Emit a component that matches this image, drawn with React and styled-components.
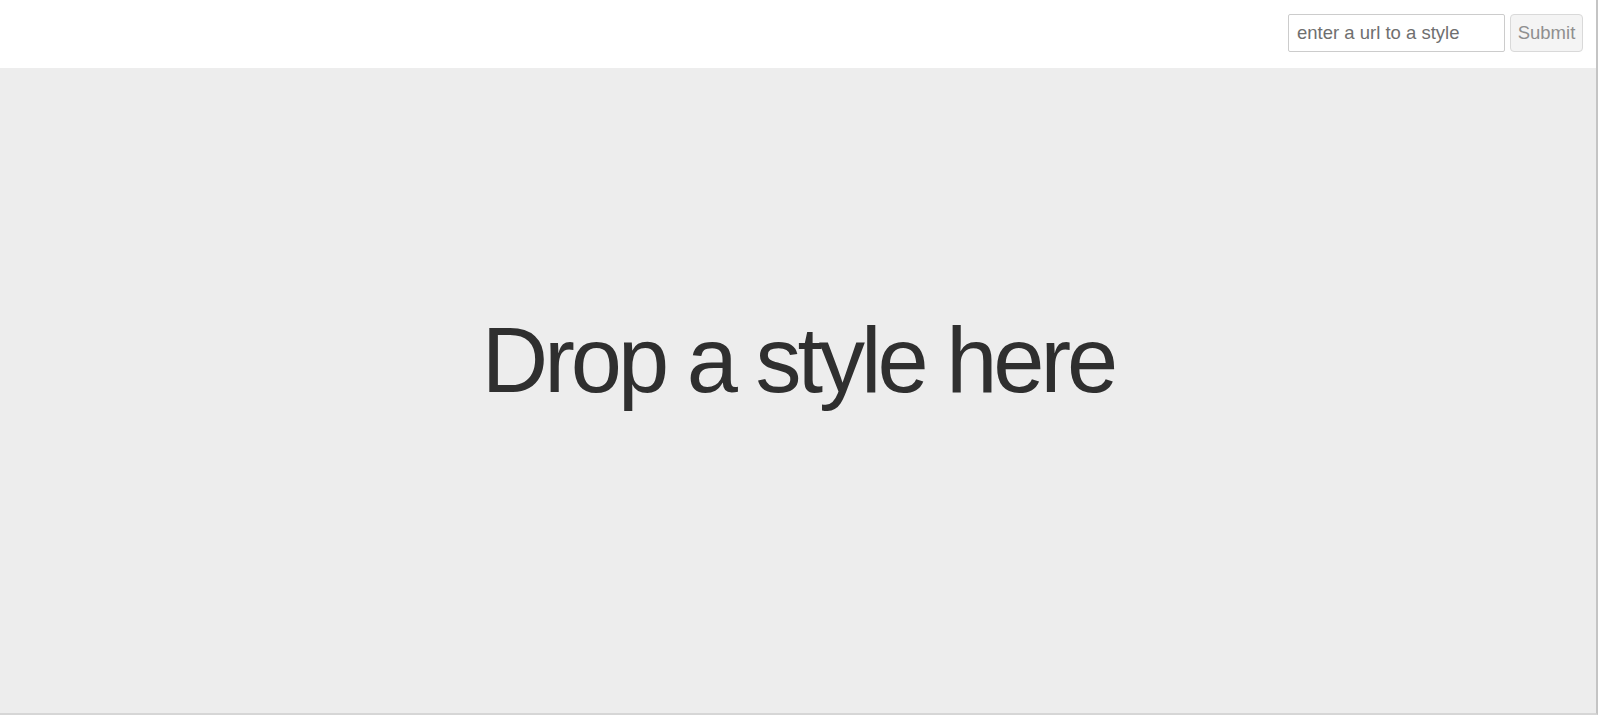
import React from 'react';
import styled, { createGlobalStyle } from 'styled-components';

const GlobalStyle = createGlobalStyle`
  html, body {
    margin: 0;
    padding: 0;
    background: #ffffff;
  }
  body {
    font-family: "Liberation Sans", Arial, sans-serif;
  }
`;

const Page = styled.div`
  width: 1596px;
  height: 713px;
  display: flex;
  flex-direction: column;
  border-right: 2px solid #c4c4c4;
  border-bottom: 2px solid #d6d6d6;
`;

const Toolbar = styled.form`
  height: 68px;
  flex-shrink: 0;
  display: flex;
  align-items: flex-start;
  justify-content: flex-end;
  gap: 5px;
  padding: 14px 13px 0 0;
  box-sizing: border-box;
  background: #ffffff;
`;

const UrlInput = styled.input`
  width: 217px;
  height: 38px;
  box-sizing: border-box;
  border: 1px solid #cccccc;
  border-radius: 2px;
  padding: 0 8px;
  font-family: "Liberation Sans", Arial, sans-serif;
  font-size: 18.5px;
  color: #333;
  outline: none;

  &::placeholder {
    color: #6f6f6f;
  }
`;

const SubmitButton = styled.button`
  width: 73px;
  height: 38px;
  box-sizing: border-box;
  border: 1px solid #d9d9d9;
  border-radius: 4px;
  background: #f4f4f4;
  color: #8f8f8f;
  font-family: "Liberation Sans", Arial, sans-serif;
  font-size: 18.5px;
  padding: 0;
`;

const DropZone = styled.div`
  flex: 1;
  background: #ededed;
  display: flex;
  justify-content: center;
  padding-top: 238px;
  box-sizing: border-box;
`;

const DropText = styled.h1`
  margin: 0;
  font-family: "Liberation Sans", Arial, sans-serif;
  font-weight: 400;
  font-size: 92px;
  line-height: 108px;
  color: #2f2f2f;
  letter-spacing: -4px;
`;

const App = () => {
  return (
    <>
      <GlobalStyle />
      <Page>
        <Toolbar onSubmit={(e) => e.preventDefault()}>
          <UrlInput type="text" placeholder="enter a url to a style" />
          <SubmitButton type="submit" disabled>Submit</SubmitButton>
        </Toolbar>
        <DropZone>
          <DropText>Drop a style here</DropText>
        </DropZone>
      </Page>
    </>
  );
};

export default App;
